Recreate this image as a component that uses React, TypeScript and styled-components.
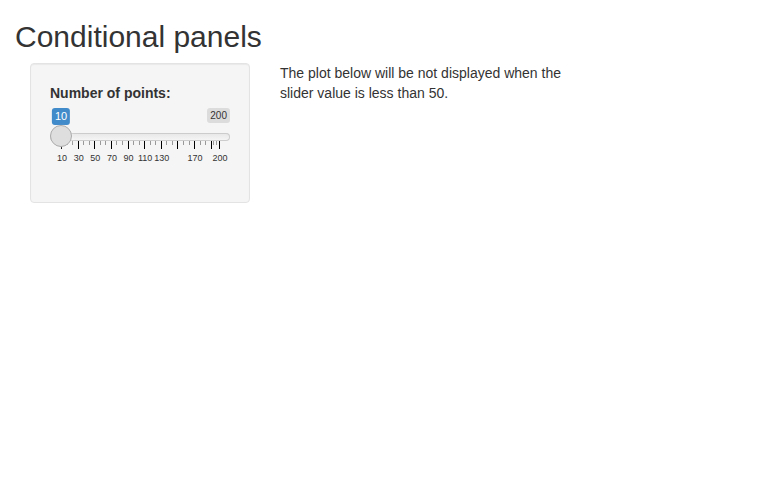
import React, { useState } from "react";
import styled, { createGlobalStyle } from "styled-components";

const GlobalStyle = createGlobalStyle`
  *, *::before, *::after { box-sizing: border-box; }
  body {
    margin: 0;
    background: #fff;
    color: #333;
    font: 14px/20px "Liberation Sans", Arial, sans-serif;
  }
`;

const Page = styled.div`
  padding: 0 15px;
`;

const Title = styled.h2`
  margin: 20px 0 10px;
  font-size: 30px;
  font-weight: 500;
  line-height: 33px;
`;

const Columns = styled.div`
  display: grid;
  grid-template-columns: 1fr 2fr;
  align-items: start;
`;

const Column = styled.div`
  min-width: 0;
  padding: 0 15px;
`;

const Well = styled.form`
  display: flex;
  flex-direction: column;
  gap: 5px;
  padding: 19px 19px 34px;
  background: #f5f5f5;
  border: 1px solid #e3e3e3;
  border-radius: 4px;
  box-shadow: inset 0 1px 1px rgba(0, 0, 0, 0.05);
`;

const Label = styled.label`
  font-weight: 700;
`;

const Slider = styled.div`
  display: flex;
  flex-direction: column;
`;

const Badges = styled.div`
  display: flex;
  position: relative;
  justify-content: flex-end;
  align-items: flex-start;
  height: 17px;
`;

const Value = styled.output<{ $at: number }>`
  position: absolute;
  left: calc(11px + (100% - 22px) * ${(p) => p.$at});
  transform: translateX(-50%);
  padding: 1px 3px;
  border-radius: 3px;
  background: #428bca;
  color: #fff;
  font-size: 11px;
  line-height: 15px;
`;

const Limit = styled.span`
  padding: 1px 3px;
  border-radius: 3px;
  background: rgba(0, 0, 0, 0.1);
  color: #333;
  font-size: 10px;
  line-height: 13px;
`;

const Range = styled.input`
  appearance: none;
  position: relative;
  z-index: 1;
  width: 100%;
  height: 24px;
  margin: 0;
  background: transparent;

  &::-webkit-slider-runnable-track {
    height: 8px;
    border-radius: 8px;
    background: linear-gradient(#dedede -50%, #fff 150%);
    box-shadow: inset 0 0 0 1px #ccc;
  }

  &::-webkit-slider-thumb {
    appearance: none;
    width: 22px;
    height: 22px;
    margin-top: -8px;
    border: 1px solid #ababab;
    border-radius: 50%;
    background: #dedede;
    box-shadow: 1px 1px 3px rgba(255, 255, 255, 0.3);
  }
`;

const Scale = styled.div`
  display: grid;
  grid-template-columns: repeat(9, 2fr) 1fr 0;
  margin: -8px 11px 0;
`;

const Segment = styled.div`
  display: flex;
  flex-direction: column;
  gap: 3px;
  min-width: 0;
  height: 27px;
`;

const Ticks = styled.div`
  display: grid;
  grid-template-columns: repeat(3, minmax(0, 1fr));
`;

const Tick = styled.span<{ $major?: boolean }>`
  width: 1px;
  height: ${(p) => (p.$major ? 8 : 4)}px;
  background: ${(p) => (p.$major ? "#000" : "#999")};
`;

const TickLabel = styled.span`
  display: flex;
  justify-content: center;
  width: 2px;
  color: #333;
  font-size: 9px;
  line-height: 13px;
`;

const Note = styled.p`
  max-width: 300px;
  margin: 0;
`;

const MIN = 10;
const MAX = 200;
const steps = [10, 30, 50, 70, 90, 110, 130, 150, 170, 190, 200];
const unlabelled = [150, 190];

export default function App() {
  const [points, setPoints] = useState(MIN);
  return (
    <>
      <GlobalStyle />
      <Page>
        <Title>Conditional panels</Title>
        <Columns>
          <Column>
            <Well>
              <Label htmlFor="points">Number of points:</Label>
              <Slider>
                <Badges>
                  <Value htmlFor="points" $at={(points - MIN) / (MAX - MIN)}>{points}</Value>
                  <Limit>{MAX}</Limit>
                </Badges>
                <Range
                  id="points"
                  type="range"
                  min={MIN}
                  max={MAX}
                  value={points}
                  onChange={(e) => setPoints(Number(e.target.value))}
                />
                <Scale aria-hidden="true">
                  {steps.map((v) => (
                    <Segment key={v}>
                      <Ticks>
                        <Tick $major />
                        {v < MAX && <Tick />}
                        {v < MAX && <Tick />}
                      </Ticks>
                      {!unlabelled.includes(v) && <TickLabel>{v}</TickLabel>}
                    </Segment>
                  ))}
                </Scale>
              </Slider>
            </Well>
          </Column>
          <Column>
            <Note>The plot below will be not displayed when the slider value is less than 50.</Note>
          </Column>
        </Columns>
      </Page>
    </>
  );
}
